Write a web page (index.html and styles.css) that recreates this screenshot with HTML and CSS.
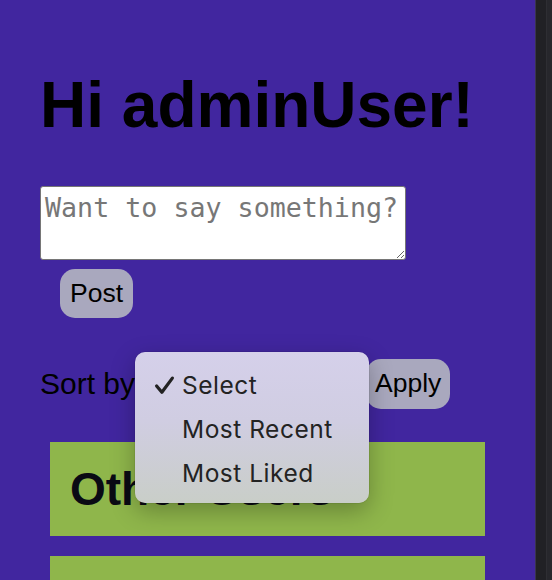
FILE: index.html
```html
<!DOCTYPE html>
<html>
<head>
<meta charset="utf-8">
<link rel="stylesheet" href="styles.css">
</head>
<body>
<div class="app">
  <main class="page">
    <h1 class="title">Hi adminUser!</h1>
    <form class="composer">
      <textarea class="compose-box" placeholder="Want to say something?"></textarea>
      <button type="button" class="pill-btn post-btn">Post</button>
    </form>
    <div class="sort-row">
      <span class="sort-label">Sort by</span>
      <div class="select-wrap">
        <div class="fake-select">Select</div>
        <div class="menu">
          <div class="menu-item"><svg class="check" viewBox="0 0 20 20" width="21" height="21"><path d="M2.5 10.5 L7.5 16.5 L17.5 3" fill="none" stroke="#222" stroke-width="3.1" stroke-linecap="round" stroke-linejoin="round"/></svg><span>Select</span></div>
          <div class="menu-item"><span>Most Recent</span></div>
          <div class="menu-item"><span>Most Liked</span></div>
        </div>
      </div>
      <button type="button" class="pill-btn apply-btn">Apply</button>
    </div>
    <section class="card"><h2 class="card-title">Other Users</h2></section>
    <section class="card"><h2 class="card-title"></h2></section>
  </main>
  <div class="edge"><div class="edge-a"></div><div class="edge-b"></div></div>
</div>
</body>
</html>
```

FILE: styles.css
```css
html, body {
  margin: 0;
  padding: 0;
  height: 100%;
  overflow: hidden;
}
body {
  font-family: "Liberation Sans", Arial, sans-serif;
}
.app {
  display: flex;
  height: 580px;
}
.page {
  flex: 1;
  background: #41269f;
  padding: 68px 0 0 40px;
  box-sizing: border-box;
  overflow: hidden;
}
.edge {
  width: 17px;
  display: flex;
  border-left: 1px solid #3a3550;
  box-sizing: border-box;
}
.edge-a {
  width: 10px;
  background: #212125;
}
.edge-b {
  flex: 1;
  background: #27272c;
  border-left: 1px solid #2e2e33;
}
.title {
  margin: 0;
  font-size: 64px;
  line-height: 74px;
  font-weight: bold;
  color: #000;
}
.composer {
  margin: 44px 0 0 0;
  display: flex;
  flex-direction: column;
  align-items: flex-start;
}
.compose-box {
  width: 366px;
  height: 74px;
  box-sizing: border-box;
  margin: 0;
  padding: 5px 4px 2px;
  border: 1px solid #767676;
  border-radius: 3px;
  background: #fff;
  font-family: "DejaVu Sans Mono", monospace;
  font-size: 26.67px;
  line-height: 31px;
}
.compose-box::placeholder {
  color: #777;
}
.pill-btn {
  font-family: "Liberation Sans", Arial, sans-serif;
  font-size: 26.5px;
  color: #000;
  background: #a9a8be;
  border: none;
  border-radius: 15px;
  line-height: 31px;
}
.post-btn {
  margin: 9px 0 0 20px;
  padding: 9px 10px;
  height: 49px;
}
.sort-row {
  margin-top: 41px;
  display: flex;
  align-items: center;
  height: 50px;
}
.sort-label {
  font-size: 30px;
  color: #000;
  margin-top: 0;
}
.select-wrap {
  position: relative;
  width: 226px;
  height: 40px;
  margin-left: 3px;
}
.fake-select {
  height: 40px;
}
.menu {
  position: absolute;
  left: -3px;
  top: -12px;
  width: 234px;
  height: 151px;
  box-sizing: border-box;
  padding: 11px 0 0 0;
  border-radius: 10px;
  background: linear-gradient(180deg, #d5d0ea 0%, #d0cde2 45%, #c9cec8 100%);
  box-shadow: 0 8px 24px rgba(0,0,0,0.28), 0 0 0 0.5px rgba(0,0,0,0.12);
  font-family: "Inter", "Noto Sans", sans-serif;
  font-size: 24.5px;
  letter-spacing: 0.5px;
  color: #232323;
  z-index: 5;
}
.menu-item {
  height: 44px;
  display: flex;
  align-items: center;
  padding-left: 47px;
  position: relative;
}
.check {
  position: absolute;
  left: 19px;
  top: 12px;
}
.apply-btn {
  margin-left: 2px;
  padding: 9px 9px 10px;
  height: 50px;
}
.card {
  background: #8fb64b;
  width: 435px;
  margin: 33px 0 0 10px;
  padding: 0 20px;
  box-sizing: border-box;
  height: 94px;
}
.card + .card {
  margin-top: 20px;
}
.card-title {
  margin: 0;
  padding-top: 21px;
  font-size: 46px;
  line-height: 52px;
  font-weight: bold;
  color: #0a0a14;
}
```
